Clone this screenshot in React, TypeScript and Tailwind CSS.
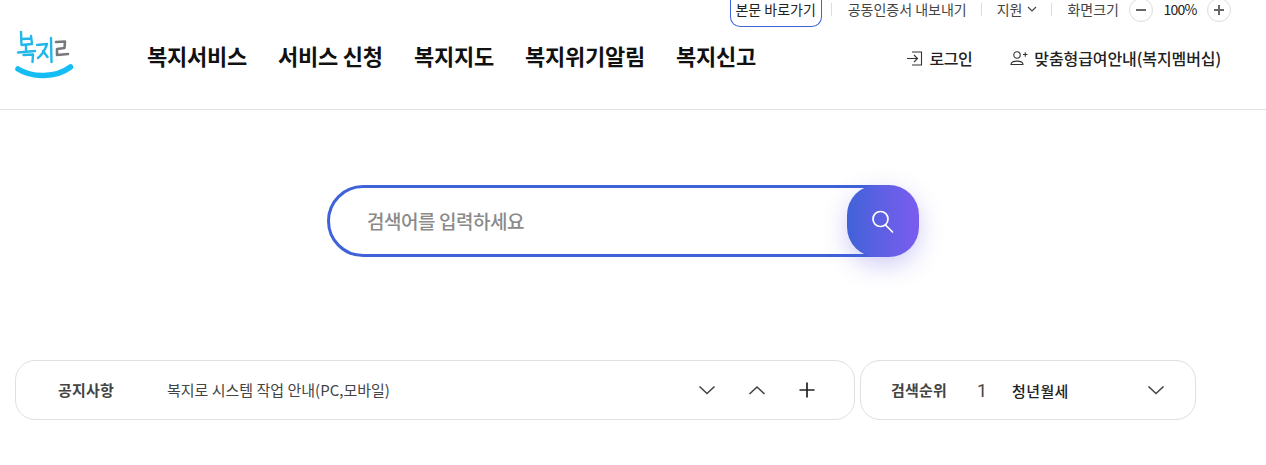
import React from "react";

const font = "font-['Noto_Sans_CJK_KR','Noto_Sans',sans-serif]";

function Logo() {
  return (
    <svg width="60" height="52" viewBox="15 27 60 52" fill="none" strokeLinecap="round" strokeLinejoin="round">
      <g stroke="#22b6ea" strokeWidth="2.4">
        <path d="M21 32 L21.5 45 L32 44 M22 39 L31 38.5 M31 36 L32 44" />
        <path d="M26 45 L26 51 M18 52.5 L35 51" />
        <path d="M23.5 55 L33 54.5 L32.5 62" />
        <path d="M37 45 L47 44 C45 50 42 55 38 58 M43 51 L47.5 57" />
        <path d="M51 38 L51.5 62" />
      </g>
      <g stroke="#77787c" strokeWidth="2.6">
        <path d="M56 42 L65 41.5 L64.5 48 L57 49 L57 55 L68 54" />
      </g>
      <path d="M18 69 C32 78 56 78 70.5 67" stroke="#14bdf4" strokeWidth="5.5" />
    </svg>
  );
}

function Chevron({ up = false }: { up?: boolean }) {
  return (
    <svg width="18" height="10" viewBox="0 0 18 10" fill="none" stroke="#444" strokeWidth="1.6">
      <path d={up ? "M1.5 9 L9 2 L16.5 9" : "M1.5 1.5 L9 8.5 L16.5 1.5"} />
    </svg>
  );
}

export default function App() {
  return (
    <div className={`${font} w-[1266px] h-[465px] bg-white overflow-hidden text-[#111]`}>
      <header className="h-[110px] border-b border-[#e0e0e0] flex flex-col">
        <div className="h-[26px] flex justify-end items-start pr-[35px] text-[14px] leading-[18px] text-[#444]">
          <span className="w-[92px] h-[27px] border border-t-0 border-[#3f62d8] rounded-b-[10px] text-center text-[#222]">본문 바로가기</span>
          <span className="w-px h-[13px] bg-[#ddd] ml-[9px] mt-[3px]" />
          <span className="ml-[16px]">공동인증서 내보내기</span>
          <span className="w-px h-[13px] bg-[#ddd] ml-[14px] mr-[15px] mt-[3px]" />
          <span className="flex items-center gap-[5px]">
            지원
            <svg width="10" height="6" viewBox="0 0 10 6" fill="none" stroke="#444" strokeWidth="1.2"><path d="M1 1 L5 5 L9 1" /></svg>
          </span>
          <span className="w-px h-[13px] bg-[#ddd] ml-[14px] mr-[15px] mt-[3px]" />
          <span>화면크기</span>
          <span className="ml-[10px] w-6 h-6 -mt-[2px] rounded-full border border-[#ddd] flex items-center justify-center">
            <span className="w-[10px] h-[2px] bg-[#666]" />
          </span>
          <span className="w-[54px] text-center text-[#222] tracking-[-0.8px]">100%</span>
          <span className="w-6 h-6 -mt-[2px] rounded-full border border-[#ddd] relative flex items-center justify-center">
            <span className="w-[10px] h-[2px] bg-[#666]" />
            <span className="absolute w-[2px] h-[10px] bg-[#666]" />
          </span>
        </div>
        <div className="flex items-start relative">
          <div className="ml-[15px] mt-[1px] w-[60px]"><Logo /></div>
          <nav className="ml-[72px] mt-[14px] flex gap-[31px] text-[22px] leading-[30px] font-bold text-[#111] tracking-[-0.23px]">
            <span>복지서비스</span>
            <span>서비스 신청</span>
            <span>복지지도</span>
            <span>복지위기알림</span>
            <span>복지신고</span>
          </nav>
          <div className="ml-auto mr-[45px] mt-[21px] flex items-center text-[16px] leading-[22px] font-medium text-[#222] tracking-[-0.1px]">
            <svg width="17" height="15" viewBox="0 0 17 15" fill="none" stroke="#333" strokeWidth="1.1" className="mr-[6px]">
              <path d="M1 7.5 H11 M8 4 L11.5 7.5 L8 11 M6 1 H15.5 V14 H6" />
            </svg>
            <span className="tracking-[-0.4px]">로그인</span>
            <svg width="18" height="16" viewBox="0 0 18 16" fill="none" stroke="#333" strokeWidth="1.1" className="ml-[38px] mr-[6px]">
              <circle cx="7" cy="5" r="3.2" />
              <path d="M1 14.5 C1 10 13 10 13 14.5 Z M13 4.5 H17.5 M15.25 2.2 V6.8" />
            </svg>
            <span>맞춤형급여안내(복지멤버십)</span>
          </div>
        </div>
      </header>

      <div className="flex pl-[327px] mt-[75px]">
        <div className="relative w-[592px] h-[72px]">
          <div className="w-[585px] h-[72px] rounded-[36px] border-[3px] border-[#3f62d8] flex items-center pl-[37px] text-[19px] font-medium text-[#8a8a8a] tracking-[-0.45px]">
            검색어를 입력하세요
          </div>
          <div className="absolute right-0 top-0 w-[72px] h-[72px] rounded-[30px] bg-gradient-to-r from-[#3f62d8] to-[#7a5cf0] shadow-[0_8px_24px_rgba(100,90,230,0.3)] flex items-center justify-center">
            <svg width="24" height="24" viewBox="0 0 24 24" fill="none" stroke="#fff" strokeWidth="1.7" strokeLinecap="round">
              <circle cx="9.5" cy="10" r="7.5" />
              <path d="M14.5 16 L21.5 23" />
            </svg>
          </div>
        </div>
      </div>

      <div className="flex gap-[5px] ml-[15px] mt-[103px]">
        <div className="w-[840px] h-[60px] rounded-[20px] border border-[#e0e0e0] flex items-center">
          <span className="ml-[42px] w-[109px] mt-[1px] text-[15px] font-bold text-[#444] tracking-[0.2px]">공지사항</span>
          <span className="mt-[1px] text-[15px] text-[#444]">복지로 시스템 작업 안내(PC,모바일)</span>
          <div className="ml-auto flex items-center mr-[38px]">
            <Chevron />
            <span className="ml-[32px] flex"><Chevron up /></span>
            <svg width="16" height="16" viewBox="0 0 16 16" stroke="#222" strokeWidth="1.7" className="ml-[33px] mr-px">
              <path d="M0.5 8 H15.5 M8 0.5 V15.5" />
            </svg>
          </div>
        </div>
        <div className="w-[336px] h-[60px] rounded-[20px] border border-[#e0e0e0] flex items-center">
          <span className="ml-[30px] w-[86px] mt-[1px] text-[15px] font-bold text-[#444] tracking-[0.2px]">검색순위</span>
          <span className="w-[35px] text-[18px] text-[#444] font-['Roboto',sans-serif]">1</span>
          <span className="mt-[2px] text-[15px] font-medium text-[#222] tracking-[0.4px]">청년월세</span>
          <span className="ml-auto mr-[30px] flex"><Chevron /></span>
        </div>
      </div>
    </div>
  );
}
